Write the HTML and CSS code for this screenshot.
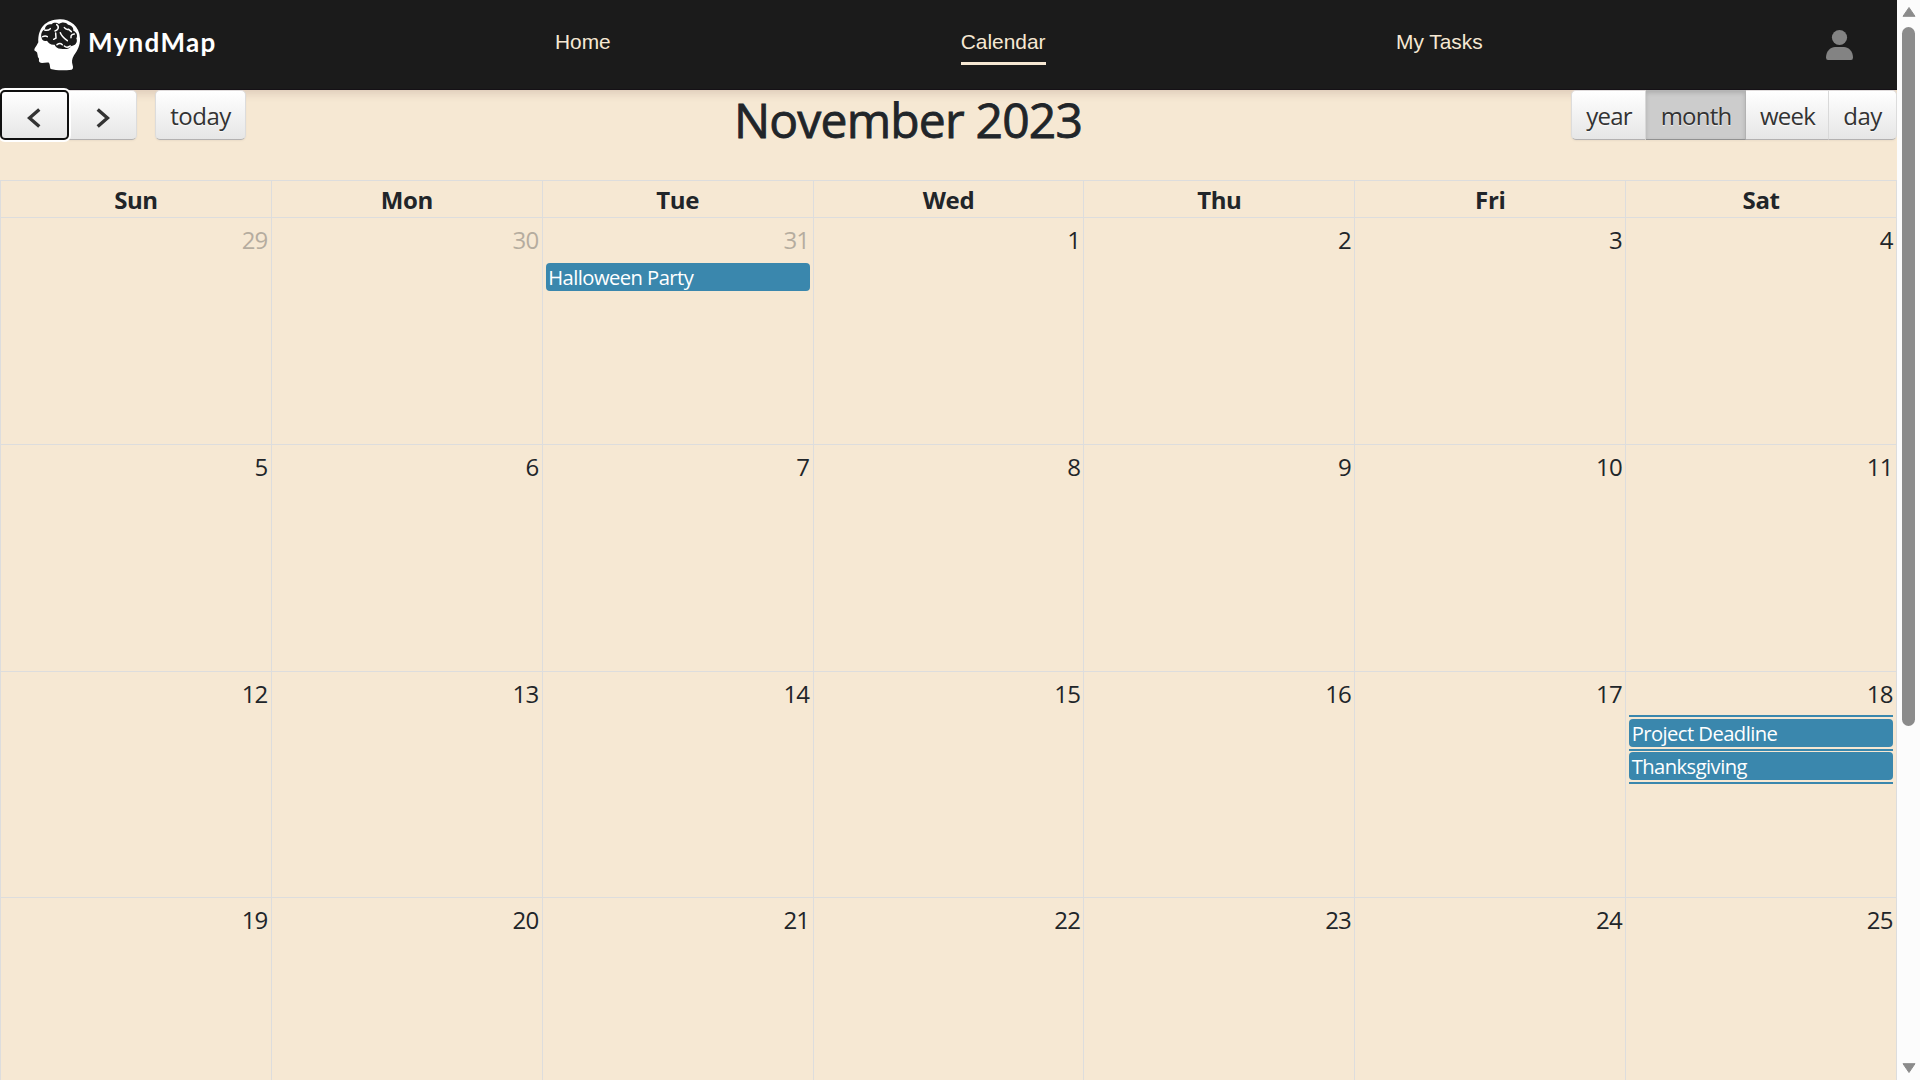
FILE: index.html
```html
<!DOCTYPE html>
<html lang="en">
<head>
<meta charset="utf-8">
<title>MyndMap</title>
<link rel="stylesheet" href="styles.css">
</head>
<body>
<div class="page">
<header class="navbar">
  <a class="brand">
    <svg class="brand-icon" width="70" height="70" viewBox="0 0 210 210">
      <path fill="#fff" d="M119 28C149 27 179 49 180 85C181 107 172 122 162 136C155 147 155 156 158 166C160 173 159 178 155 179C134 182 108 182 92 177C89 172 91 165 87 158C79 155 66 162 59 157C54 153 59 148 56 144C52 141 54 136 52 132C53 126 48 124 44 122C40 118 50 108 55 97C53 54 77 29 119 28Z"/>
      <path fill="#1b1b1b" d="M65 83C61 73 66 62 75 57C76 46 87 42 95 43C101 36 111 38 117 42C126 34 139 37 144 44C154 45 161 53 160 62C170 66 174 77 169 85C175 98 164 108 154 108C146 121 129 117 124 116C114 117 106 111 104 104C93 106 85 99 81 92C72 95 65 90 65 83Z"/>
      <path fill="none" stroke="#fff" stroke-width="4.5" stroke-linecap="round" d="M74 60Q84 63 91 56M110 44Q117 49 114 56Q111 62 105 63M133 53Q138 60 146 58L154 65M163 72Q152 73 153 83M68 80Q76 76 82 80M107 69L108 84L101 88M121 68Q124 78 142 92M111 104Q120 97 127 104M133 108Q140 115 151 108"/>
    </svg>
    <span class="brand-name">MyndMap</span>
  </a>
  <nav class="links">
    <a class="link home">Home</a>
    <a class="link calendar active">Calendar</a>
    <a class="link tasks">My Tasks</a>
  </nav>
  <svg class="user" width="27" height="30" viewBox="0 0 27 30" fill="#838383">
    <ellipse cx="13.5" cy="7.5" rx="7.6" ry="7.5"/>
    <path d="M0 27.5C0 21 5 17 9 17H18C22 17 27 21 27 27.5Q27 30 25 30H2Q0 30 0 27.5Z"/>
  </svg>
</header>
<main class="cal">
  <div class="toolbar">
    <div class="left">
      <button class="btn first prev focused"><svg width="14" height="20" viewBox="0 0 14 20"><path d="M12.3 1.5L2.5 10L12.3 18.5" fill="none" stroke="#333" stroke-width="3.4"/></svg></button><button class="btn last next"><svg width="14" height="20" viewBox="0 0 14 20"><path d="M1.7 1.5L11.5 10L1.7 18.5" fill="none" stroke="#333" stroke-width="3.4"/></svg></button>
      <button class="btn first last today"><span>today</span></button>
    </div>
    <h2 class="title">November 2023</h2>
    <div class="right">
      <button class="btn first year"><span>year</span></button><button class="btn month on"><span>month</span></button><button class="btn week"><span>week</span></button><button class="btn last day-view"><span>day</span></button>
    </div>
  </div>
  <div class="grid">
    <div class="row head"><div>Sun</div><div>Mon</div><div>Tue</div><div>Wed</div><div>Thu</div><div>Fri</div><div>Sat</div></div>
    <div class="row">
      <div class="cell"><span class="num other">29</span></div>
      <div class="cell"><span class="num other">30</span></div>
      <div class="cell"><span class="num other">31</span><div class="event"><span>Halloween Party</span></div></div>
      <div class="cell"><span class="num">1</span></div>
      <div class="cell"><span class="num">2</span></div>
      <div class="cell"><span class="num">3</span></div>
      <div class="cell"><span class="num">4</span></div>
    </div>
    <div class="row">
      <div class="cell"><span class="num">5</span></div>
      <div class="cell"><span class="num">6</span></div>
      <div class="cell"><span class="num">7</span></div>
      <div class="cell"><span class="num">8</span></div>
      <div class="cell"><span class="num">9</span></div>
      <div class="cell"><span class="num">10</span></div>
      <div class="cell"><span class="num">11</span></div>
    </div>
    <div class="row">
      <div class="cell"><span class="num">12</span></div>
      <div class="cell"><span class="num">13</span></div>
      <div class="cell"><span class="num">14</span></div>
      <div class="cell"><span class="num">15</span></div>
      <div class="cell"><span class="num">16</span></div>
      <div class="cell"><span class="num">17</span></div>
      <div class="cell"><span class="num">18</span>
        <div class="stack"><div class="rule"></div><div class="event"><span>Project Deadline</span></div><div class="rule"></div><div class="event"><span>Thanksgiving</span></div><div class="rule"></div></div>
      </div>
    </div>
    <div class="row">
      <div class="cell"><span class="num">19</span></div>
      <div class="cell"><span class="num">20</span></div>
      <div class="cell"><span class="num">21</span></div>
      <div class="cell"><span class="num">22</span></div>
      <div class="cell"><span class="num">23</span></div>
      <div class="cell"><span class="num">24</span></div>
      <div class="cell"><span class="num">25</span></div>
    </div>
  </div>
</main>
</div>
<aside class="scrollbar">
  <svg width="14" height="10" viewBox="0 0 14 10"><path d="M7 .5L13 9.3H1Z" fill="#8b8b8b" stroke="#8b8b8b" stroke-linejoin="round"/></svg>
  <div class="thumb"></div>
  <svg width="14" height="10" viewBox="0 0 14 10"><path d="M7 9.5L13 .7H1Z" fill="#8b8b8b" stroke="#8b8b8b" stroke-linejoin="round"/></svg>
</aside>
</body>
</html>
```
FILE: styles.css
```css
* { box-sizing: border-box; }
body {
  margin: 0;
  height: 1080px;
  display: flex;
  overflow: hidden;
  background: #f6e8d3;
  color: #212529;
  font: 24px/36px "Open Sans", "Noto Sans", sans-serif;
}
.page { width: 1897px; height: 1080px; overflow: hidden; }

.navbar {
  display: flex;
  align-items: flex-start;
  height: 90px;
  background: #1b1b1b;
  border-bottom: 1px solid #151116;
  box-shadow: 0 2px 10px rgba(90, 50, 50, .2);
}
.brand { display: flex; width: 555px; padding: 10px 0 0 20px; }
.brand-name {
  margin: 14px 0 0 -2px;
  color: #fff;
  font: 700 26px/36px Lato, sans-serif;
  letter-spacing: 1.3px;
}
.links { display: flex; width: 1271px; padding-top: 30px; }
.link {
  color: #f6e8d3;
  font: 20.9px/24px "Liberation Sans", Arial, sans-serif;
  height: 35px;
  white-space: nowrap;
}
.home { margin-right: 350px; }
.calendar { margin-right: 350.5px; }
.active { border-bottom: 3px solid #f6e8d3; }
.user { margin-top: 30px; }

.toolbar {
  display: flex;
  justify-content: space-between;
  height: 90px;
}
.left, .right { display: flex; align-items: flex-start; }
.title {
  margin: 0 1px 0 0;
  padding-top: 1px;
  font-size: 48px;
  line-height: 57px;
  font-weight: 500;
  letter-spacing: -.8px;
  -webkit-text-stroke: .8px #212529;
  white-space: nowrap;
}
.btn {
  display: flex;
  align-items: center;
  justify-content: center;
  height: 50px;
  margin: 0;
  padding: 2px 0 0;
  border: 1px solid;
  border-color: #e0dcdc #dcdcdc #b3b1b1;
  border-left-width: 0;
  background: linear-gradient(#fff, #e6e6e6);
  box-shadow: inset 0 1px 0 rgba(255, 255, 255, .2), 0 1px 2px rgba(0, 0, 0, .05);
  text-shadow: 0 1px 1px rgba(255, 255, 255, .75);
  color: #333;
  font: inherit;
  letter-spacing: -.8px;
  white-space: nowrap;
}
.first { border-left-width: 1px; border-radius: 5px 0 0 5px; }
.last { border-radius: 0 5px 5px 0; }
.first.last { border-radius: 5px; }
.prev { width: 69px; }
.next { width: 68px; }
.btn svg { margin-top: 4px; }
.focused {
  border: 2px solid #101010;
  border-radius: 5px;
  box-shadow: 0 0 0 2px #fff;
  padding-right: 2px;
  z-index: 1;
}
.today { width: 91px; margin-left: 18px; letter-spacing: -.5px; }
.year { width: 75px; padding-left: 1px; }
.month { width: 100px; padding-left: 1px; }
.week { width: 83px; padding-left: 1px; }
.day-view { width: 68px; letter-spacing: -.6px; }
.on {
  background: #ccc;
  border-color: #b5b5b5 #b5b5b5 #919191;
  box-shadow: inset 0 2px 4px rgba(0, 0, 0, .15), 0 1px 2px rgba(0, 0, 0, .05);
}

.grid {
  border: solid #ddd;
  border-width: 1px 0 0 1px;
}
.row {
  display: grid;
  grid-template-columns: repeat(7, 1fr);
  height: 226.8px;
}
.row > div {
  border: solid #ddd;
  border-width: 0 1px 1px 0;
  min-width: 0;
}
.row.head {
  height: 37px;
  text-align: center;
  font-weight: 700;
  line-height: 34px;
  letter-spacing: -.4px;
}
.row.head > div { padding-top: 2px; }
.cell { display: flex; flex-direction: column; padding: 4px 3px 0; }
.num { align-self: flex-end; height: 41px; padding-right: .3px; letter-spacing: -.8px; }
.other { opacity: .3; }
.event {
  height: 28px;
  border-radius: 4px;
  background: #3a87ad;
  color: #fff;
  padding-left: 2.5px;
  font-size: 20.2px;
  line-height: 29px;
  letter-spacing: -.55px;
  white-space: nowrap;
}
.stack { display: flex; flex-direction: column; gap: 2px; margin-top: -2px; }
.rule { height: 2px; background: #3a87ad; }
.stack .event + .rule { margin-bottom: -1px; }

.scrollbar {
  display: flex;
  flex-direction: column;
  align-items: center;
  width: 23px;
  height: 1080px;
  padding: 7px 0;
  background: #fcfcfc;
}
.thumb { width: 13px; height: 699px; margin: 10px 0 auto; border-radius: 7px; background: #8b8b8b; }
```
